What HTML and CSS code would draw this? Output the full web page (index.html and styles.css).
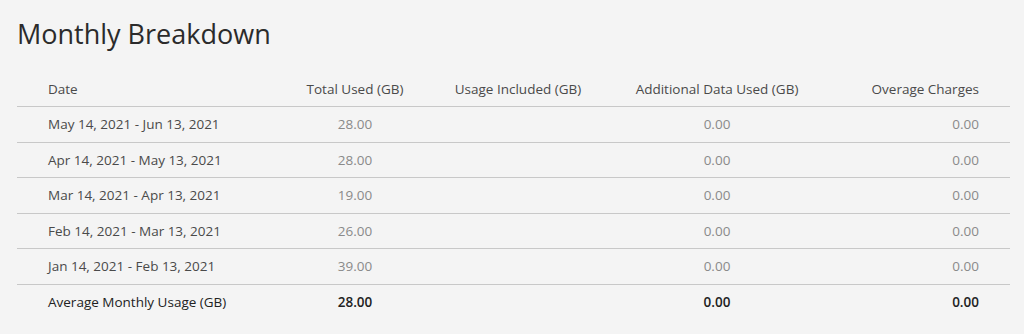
FILE: index.html
```html
<!DOCTYPE html>
<html lang="en">
<head>
    <meta charset="UTF-8">
    <title>Monthly Breakdown</title>
    <link rel="stylesheet" href="styles.css">
</head>
<body>
    <div class="breakdown">
        <h1 class="breakdown-title">Monthly Breakdown</h1>
        <table class="usage-table">
            <colgroup>
                <col class="col-date">
                <col class="col-total">
                <col class="col-included">
                <col class="col-additional">
                <col class="col-charges">
            </colgroup>
            <thead>
                <tr>
                    <th class="cell-date">Date</th>
                    <th class="cell-center">Total Used (GB)</th>
                    <th class="cell-center">Usage Included (GB)</th>
                    <th class="cell-center">Additional Data Used (GB)</th>
                    <th class="cell-right">Overage Charges</th>
                </tr>
            </thead>
            <tbody>
                <tr>
                    <td class="cell-date">May 14, 2021 - Jun 13, 2021</td>
                    <td class="cell-center">28.00</td>
                    <td class="cell-center"></td>
                    <td class="cell-center">0.00</td>
                    <td class="cell-right">0.00</td>
                </tr>
                <tr>
                    <td class="cell-date">Apr 14, 2021 - May 13, 2021</td>
                    <td class="cell-center">28.00</td>
                    <td class="cell-center"></td>
                    <td class="cell-center">0.00</td>
                    <td class="cell-right">0.00</td>
                </tr>
                <tr>
                    <td class="cell-date">Mar 14, 2021 - Apr 13, 2021</td>
                    <td class="cell-center">19.00</td>
                    <td class="cell-center"></td>
                    <td class="cell-center">0.00</td>
                    <td class="cell-right">0.00</td>
                </tr>
                <tr>
                    <td class="cell-date">Feb 14, 2021 - Mar 13, 2021</td>
                    <td class="cell-center">26.00</td>
                    <td class="cell-center"></td>
                    <td class="cell-center">0.00</td>
                    <td class="cell-right">0.00</td>
                </tr>
                <tr>
                    <td class="cell-date">Jan 14, 2021 - Feb 13, 2021</td>
                    <td class="cell-center">39.00</td>
                    <td class="cell-center"></td>
                    <td class="cell-center">0.00</td>
                    <td class="cell-right">0.00</td>
                </tr>
            </tbody>
            <tfoot>
                <tr>
                    <td class="cell-date">Average Monthly Usage (GB)</td>
                    <td class="cell-center">28.00</td>
                    <td class="cell-center"></td>
                    <td class="cell-center">0.00</td>
                    <td class="cell-right">0.00</td>
                </tr>
            </tfoot>
        </table>
    </div>
</body>
</html>
```

FILE: styles.css
```css
* {
    box-sizing: border-box;
    margin: 0;
    padding: 0;
}

body {
    background-color: #f4f4f4;
    font-family: 'Open Sans', sans-serif;
    color: #333;
}

.breakdown {
    padding: 14px 14px 0 17px;
}

.breakdown-title {
    font-size: 27px;
    font-weight: 400;
    color: #2b2b2b;
    line-height: 40px;
    margin-bottom: 17px;
}

.usage-table {
    width: 993px;
    border-collapse: collapse;
    table-layout: fixed;
    font-size: 13.5px;
}

.col-date { width: 263px; }
.col-total { width: 150px; }
.col-included { width: 176px; }
.col-additional { width: 222px; }
.col-charges { width: 182px; }

.usage-table th,
.usage-table td {
    height: 35.5px;
    font-weight: 400;
    white-space: nowrap;
}

.usage-table th {
    color: #4a4a4a;
    border-bottom: 1px solid #c8c8c8;
}

.usage-table tbody td {
    color: #8a8a8a;
    border-bottom: 1px solid #c8c8c8;
}

.usage-table tbody td.cell-date {
    color: #4a4a4a;
}

.usage-table tfoot td {
    color: #222;
    font-weight: 600;
}

.usage-table tfoot td.cell-date {
    font-weight: 400;
}

.cell-date {
    text-align: left;
    padding-left: 31px;
}

.cell-center {
    text-align: center;
}

.cell-right {
    text-align: right;
    padding-right: 31px;
}
```
